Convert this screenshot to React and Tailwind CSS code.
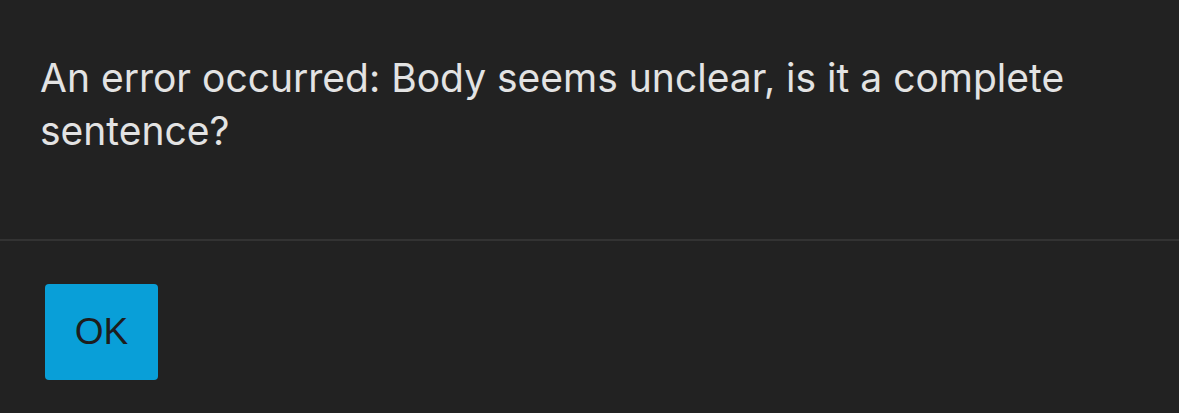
export default function App() {
  return (
    <div className="w-[1179px] h-[413px] bg-[#222222] flex flex-col font-['Inter',sans-serif]">
      {/* message */}
      <div className="h-[239px] px-10 pt-[51px]">
        <p className="text-[39px] leading-[53px] text-[#e3e3e3]">
          An error occurred: Body seems unclear, is it a complete sentence?
        </p>
      </div>
      <div className="h-[2px] bg-[#333333]" />
      {/* actions */}
      <div className="flex-1 px-[45px] pt-[43px]">
        <button className="w-[113px] h-[96px] rounded-[4px] bg-[#099fd8] text-[#1d1d1d] text-[37px] font-['Liberation_Sans',sans-serif]">
          OK
        </button>
      </div>
    </div>
  );
}
